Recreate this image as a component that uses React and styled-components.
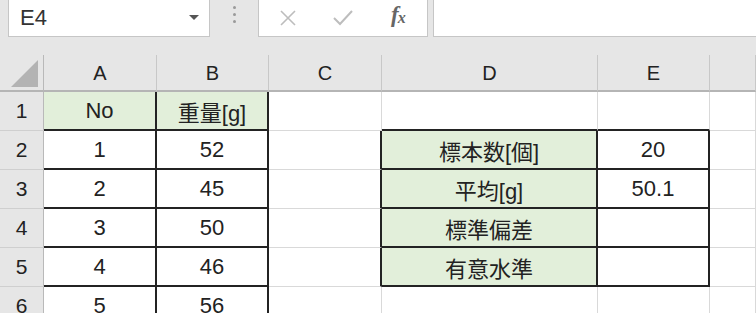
import React from 'react';
import styled, { createGlobalStyle } from 'styled-components';

const GlobalStyle = createGlobalStyle`
  html, body {
    margin: 0;
    padding: 0;
    background: #ffffff;
    overflow: hidden;
  }
  body {
    font-family: "Liberation Sans", "Noto Sans CJK JP", sans-serif;
    color: #222;
  }
`;

const Window = styled.div`
  width: 756px;
  height: 313px;
  overflow: hidden;
  background: #ffffff;
`;

const Toolbar = styled.div`
  height: 55px;
  background: #e6e6e6;
  display: flex;
  align-items: flex-start;
  box-sizing: border-box;
  padding-left: 8px;
`;

const NameBox = styled.div`
  width: 202px;
  height: 37px;
  box-sizing: border-box;
  background: #ffffff;
  border: 1px solid #c6c6c6;
  border-top: none;
  display: flex;
  align-items: center;
  justify-content: space-between;
  padding: 0 10px 0 11px;
  font-size: 22px;
  color: #333;
`;

const DropArrow = styled.span`
  width: 0;
  height: 0;
  border-left: 5px solid transparent;
  border-right: 5px solid transparent;
  border-top: 5px solid #555;
  margin-top: -2px;
`;

const Grip = styled.div`
  width: 48px;
  height: 37px;
  display: flex;
  flex-direction: column;
  align-items: center;
  justify-content: flex-start;
  gap: 4px;
  padding-top: 6px;
  box-sizing: border-box;
`;

const Dot = styled.span`
  width: 3px;
  height: 3px;
  border-radius: 50%;
  background: #9a9a9a;
`;

const FxBox = styled.div`
  width: 170px;
  height: 37px;
  box-sizing: border-box;
  background: #ffffff;
  border: 1px solid #c6c6c6;
  border-top: none;
  display: flex;
  align-items: center;
  padding-left: 20px;
  gap: 36px;
`;

const FxLabel = styled.span`
  font-family: "Liberation Serif", serif;
  font-style: italic;
  font-weight: bold;
  font-size: 23px;
  line-height: 1;
  color: #666;
  margin-top: -8px;
  margin-left: 2px;
  letter-spacing: -1px;

  sub {
    font-size: 16px;
    vertical-align: -1px;
  }
`;

const FormulaBar = styled.div`
  flex: 1;
  margin-left: 5px;
  height: 37px;
  box-sizing: border-box;
  background: #ffffff;
  border: 1px solid #c6c6c6;
  border-top: none;
  border-right: none;
`;

const Sheet = styled.div`
  display: grid;
  grid-template-columns: 44px 113px 112px 113px 216px 112px 1fr;
  grid-template-rows: 37px repeat(6, 39px);
`;

const Corner = styled.div`
  background: #e6e6e6;
  box-sizing: border-box;
  border-right: 1px solid #b9b9b9;
  border-bottom: 2px solid #b5b5b5;
  display: flex;
  align-items: flex-end;
  justify-content: flex-end;
  padding: 0 5px 3px 0;
`;

const ColHead = styled.div`
  background: #e6e6e6;
  box-sizing: border-box;
  border-right: 1px solid #c8c8c8;
  border-bottom: 2px solid #b5b5b5;
  display: flex;
  align-items: center;
  justify-content: center;
  font-size: 20px;
  color: #222;
  padding-top: 2px;
`;

const RowHead = styled.div`
  background: #e6e6e6;
  box-sizing: border-box;
  border-right: 1px solid #b9b9b9;
  border-bottom: 1px solid #cfcfcf;
  display: flex;
  align-items: center;
  justify-content: center;
  font-size: 21px;
  color: #222;
`;

const Cell = styled.div`
  box-sizing: border-box;
  background: ${(p) => (p.$fill ? '#e2efda' : '#ffffff')};
  border-right: ${(p) => (p.$r ? '2px solid #232323' : '1px solid #d9d9d9')};
  border-bottom: ${(p) => (p.$b ? '2px solid #232323' : '1px solid #d9d9d9')};
  display: flex;
  align-items: center;
  justify-content: center;
  font-size: 22px;
  color: #222;
  white-space: nowrap;
`;

const rows = [
  ['No', '重量[g]', '', '', ''],
  ['1', '52', '', '標本数[個]', '20'],
  ['2', '45', '', '平均[g]', '50.1'],
  ['3', '50', '', '標準偏差', ''],
  ['4', '46', '', '有意水準', ''],
  ['5', '56', '', '', ''],
];

const boxed = (r) => r >= 1 && r <= 4;

const cellProps = (r, c) => {
  // c: 0=A 1=B 2=C 3=D 4=E 5=F
  if (c === 0 || c === 1) return { $r: true, $b: true, $fill: r === 0 };
  if (c === 2) return { $r: boxed(r) };
  if (c === 3 || c === 4) {
    if (r === 0) return { $b: true };
    if (boxed(r)) return { $r: true, $b: true, $fill: c === 3 };
  }
  return {};
};

const CloseIcon = () => (
  <svg width="18" height="18" viewBox="0 0 18 18">
    <path d="M2 2 L16 16 M16 2 L2 16" stroke="#bdbdbd" strokeWidth="1.6" fill="none" />
  </svg>
);

const CheckIcon = () => (
  <svg width="20" height="16" viewBox="0 0 20 16">
    <path d="M1 8 L7 14 L19 1" stroke="#bdbdbd" strokeWidth="2" fill="none" />
  </svg>
);

const App = () => (
  <Window>
    <GlobalStyle />
    <Toolbar>
      <NameBox>
        E4
        <DropArrow />
      </NameBox>
      <Grip>
        <Dot />
        <Dot />
        <Dot />
      </Grip>
      <FxBox>
        <CloseIcon />
        <CheckIcon />
        <FxLabel>
          f<sub>x</sub>
        </FxLabel>
      </FxBox>
      <FormulaBar />
    </Toolbar>
    <Sheet>
      <Corner>
        <svg width="27" height="27" viewBox="0 0 27 27">
          <polygon points="27,0 27,27 0,27" fill="#b3b3b3" />
        </svg>
      </Corner>
      {['A', 'B', 'C', 'D', 'E', ''].map((h, i) => (
        <ColHead key={i}>{h}</ColHead>
      ))}
      {rows.map((row, r) => (
        <React.Fragment key={r}>
          <RowHead>{r + 1}</RowHead>
          {[...row, ''].map((v, c) => (
            <Cell key={c} {...cellProps(r, c)}>
              {v}
            </Cell>
          ))}
        </React.Fragment>
      ))}
    </Sheet>
  </Window>
);

export default App;
